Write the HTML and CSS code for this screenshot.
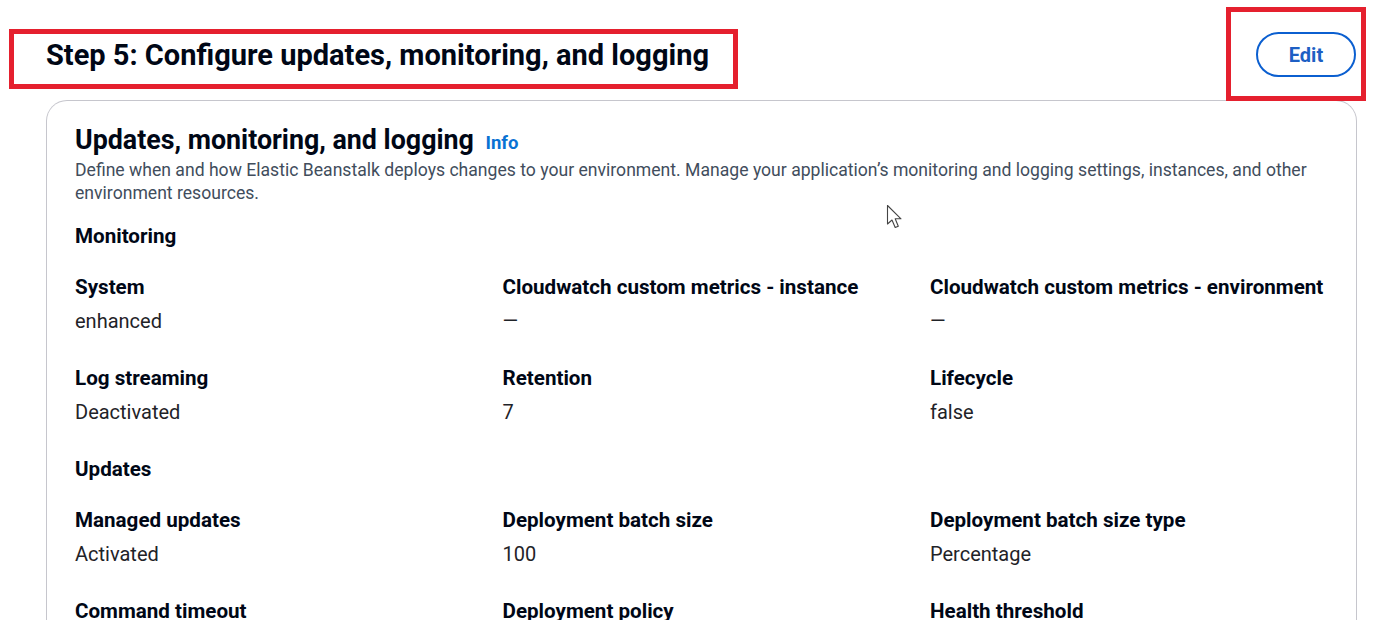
FILE: index.html
```html
<!DOCTYPE html>
<html lang="en">
<head>
<meta charset="utf-8">
<title>Step 5: Configure updates, monitoring, and logging</title>
<link rel="stylesheet" href="styles.css">
</head>
<body>
<div class="page">
  <header class="step-header">
    <div class="title-box">
      <h1 class="step-title">Step 5: Configure updates, monitoring, and logging</h1>
    </div>
    <div class="edit-box">
      <button class="edit-btn" type="button">Edit</button>
    </div>
  </header>

  <section class="card">
    <div class="card-head">
      <h2 class="card-title">Updates, monitoring, and logging <a class="info" href="#">Info</a></h2>
      <p class="card-desc">Define when and how Elastic Beanstalk deploys changes to your environment. Manage your application’s monitoring and logging settings, instances, and other environment resources.</p>
    </div>

    <div class="group">
      <h3 class="group-title">Monitoring</h3>
      <div class="kv-grid">
        <div class="kv"><div class="k">System</div><div class="v">enhanced</div></div>
        <div class="kv"><div class="k">Cloudwatch custom metrics - instance</div><div class="v">—</div></div>
        <div class="kv"><div class="k">Cloudwatch custom metrics - environment</div><div class="v">—</div></div>
        <div class="kv"><div class="k">Log streaming</div><div class="v">Deactivated</div></div>
        <div class="kv"><div class="k">Retention</div><div class="v">7</div></div>
        <div class="kv"><div class="k">Lifecycle</div><div class="v">false</div></div>
      </div>
    </div>

    <div class="group">
      <h3 class="group-title">Updates</h3>
      <div class="kv-grid">
        <div class="kv"><div class="k">Managed updates</div><div class="v">Activated</div></div>
        <div class="kv"><div class="k">Deployment batch size</div><div class="v">100</div></div>
        <div class="kv"><div class="k">Deployment batch size type</div><div class="v">Percentage</div></div>
        <div class="kv"><div class="k">Command timeout</div></div>
        <div class="kv"><div class="k">Deployment policy</div></div>
        <div class="kv"><div class="k">Health threshold</div></div>
      </div>
    </div>
  </section>

  <svg class="cursor" width="18" height="27" viewBox="0 0 18 27" aria-hidden="true">
    <path d="M1.5 1.5 L1.5 20 L6 16 L9.2 23.5 L12.3 22.2 L9.2 14.8 L15 14.8 Z" fill="#fff" stroke="#444" stroke-width="1.1" stroke-linejoin="round"/>
  </svg>
</div>
</body>
</html>
```

FILE: styles.css
```css
html, body {
  margin: 0;
  padding: 0;
  height: 620px;
  overflow: hidden;
  background: #ffffff;
}

body {
  font-family: Roboto, "Liberation Sans", Arial, sans-serif;
  color: #000716;
}

.page {
  position: relative;
  width: 1375px;
  height: 620px;
}

.step-header {
  display: flex;
  justify-content: space-between;
  align-items: flex-start;
  height: 100px;
  padding: 0 9px;
}

.title-box {
  margin-top: 29px;
  width: 729px;
  height: 60px;
  box-sizing: border-box;
  border: 5px solid #e5202e;
  padding: 4px 0 0 32px;
}

.step-title {
  margin: 0;
  font-size: 29px;
  line-height: 34px;
  font-weight: 700;
  color: #000716;
  white-space: nowrap;
}

.edit-box {
  margin-top: 7px;
  width: 140px;
  height: 94px;
  box-sizing: border-box;
  border: 5px solid #e5202e;
  padding: 20px 0 0 25px;
}

.edit-btn {
  display: block;
  width: 100px;
  height: 45px;
  border: 2px solid #0b5fd0;
  border-radius: 23px;
  background: #ffffff;
  color: #1d5fc4;
  font-family: Roboto, "Liberation Sans", Arial, sans-serif;
  font-size: 20px;
  font-weight: 700;
  padding: 0;
  cursor: pointer;
}

.card {
  margin: 0 18px 0 46px;
  border: 1px solid #c6c6cd;
  border-bottom: none;
  border-radius: 21px 21px 0 0;
  padding: 23px 28px 20px 28px;
  min-height: 540px;
  box-sizing: border-box;
}

.card-head {
  margin-bottom: 17px;
}

.card-title {
  margin: 0;
  font-size: 26.8px;
  line-height: 32px;
  font-weight: 700;
  color: #000716;
}

.info {
  font-size: 18.5px;
  font-weight: 700;
  color: #0972d3;
  text-decoration: none;
  margin-left: 5px;
}

.card-desc {
  margin: 0;
  font-size: 17.6px;
  line-height: 23px;
  color: #414d5c;
}

.group + .group {
  margin-top: 29px;
}

.group-title {
  margin: 0 0 23px;
  font-size: 20.6px;
  line-height: 28px;
  font-weight: 700;
  color: #000716;
}

.kv-grid {
  display: grid;
  grid-template-columns: repeat(3, 1fr);
  column-gap: 29.5px;
  row-gap: 29px;
}

.k {
  font-size: 20.6px;
  line-height: 28px;
  font-weight: 700;
  color: #000716;
  white-space: nowrap;
}

.v {
  margin-top: 6px;
  font-size: 20px;
  line-height: 28px;
  color: #1f2328;
}

.cursor {
  position: absolute;
  left: 886px;
  top: 204px;
}
```
